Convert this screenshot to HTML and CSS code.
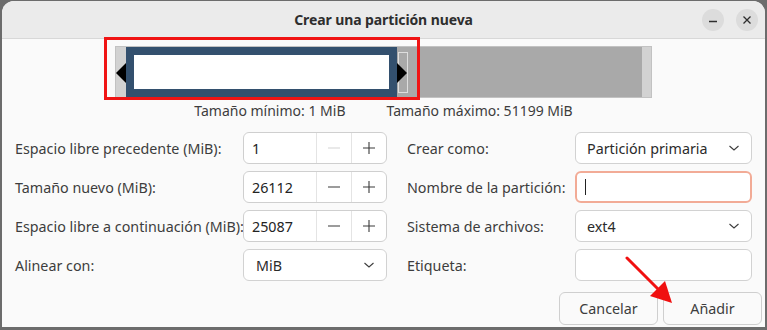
FILE: index.html
```html
<!DOCTYPE html>
<html lang="es">
<head>
<meta charset="utf-8">
<title>Crear una partición nueva</title>
<link rel="stylesheet" href="styles.css">
</head>
<body>
<div class="dialog">
  <header class="titlebar">
    <span class="title">Crear una partición nueva</span>
    <div class="wm-buttons">
      <span class="wm-btn"><svg width="12" height="12" viewBox="0 0 12 12"><line x1="2" y1="7.5" x2="10" y2="7.5" stroke="#2e2e2e" stroke-width="1.4"/></svg></span>
      <span class="wm-btn"><svg width="12" height="12" viewBox="0 0 12 12"><path d="M2.5 2.5 L9.5 9.5 M9.5 2.5 L2.5 9.5" stroke="#2e2e2e" stroke-width="1.3"/></svg></span>
    </div>
  </header>

  <main class="content">
    <div class="bar-row">
      <div class="strip">
        <div class="part"><div class="part-inner"></div></div>
        <div class="unalloc"></div>
        <span class="handle"></span>
        <svg class="tri tri-left" width="10" height="20" viewBox="0 0 10 20"><polygon points="10,0 0,10 10,20" fill="#000"/></svg>
        <svg class="tri tri-right" width="10" height="20" viewBox="0 0 10 20"><polygon points="0,0 10,10 0,20" fill="#000"/></svg>
      </div>
      <span class="highlight-box"></span>
    </div>

    <div class="stats">
      <span>Tamaño mínimo: 1 MiB</span>
      <span>Tamaño máximo: 51199 MiB</span>
    </div>

    <div class="form">
      <label class="lbl">Espacio libre precedente (MiB):</label>
      <div class="spin">
        <span class="spin-val">1</span>
        <span class="spin-btn disabled"><svg width="14" height="14" viewBox="0 0 14 14"><line x1="1" y1="7" x2="13" y2="7" stroke="currentColor" stroke-width="1.1"/></svg></span>
        <span class="spin-btn"><svg width="14" height="14" viewBox="0 0 14 14"><line x1="1" y1="7" x2="13" y2="7" stroke="currentColor" stroke-width="1.1"/><line x1="7" y1="1" x2="7" y2="13" stroke="currentColor" stroke-width="1.1"/></svg></span>
      </div>
      <label class="lbl lbl-r">Crear como:</label>
      <div class="combo"><span>Partición primaria</span><svg width="12" height="8" viewBox="0 0 12 8"><polyline points="1.5,2 6,6 10.5,2" fill="none" stroke="#3d3d3d" stroke-width="1.1"/></svg></div>

      <label class="lbl">Tamaño nuevo (MiB):</label>
      <div class="spin">
        <span class="spin-val">26112</span>
        <span class="spin-btn"><svg width="14" height="14" viewBox="0 0 14 14"><line x1="1" y1="7" x2="13" y2="7" stroke="currentColor" stroke-width="1.1"/></svg></span>
        <span class="spin-btn"><svg width="14" height="14" viewBox="0 0 14 14"><line x1="1" y1="7" x2="13" y2="7" stroke="currentColor" stroke-width="1.1"/><line x1="7" y1="1" x2="7" y2="13" stroke="currentColor" stroke-width="1.1"/></svg></span>
      </div>
      <label class="lbl lbl-r">Nombre de la partición:</label>
      <div class="entry focused"><span class="caret"></span></div>

      <label class="lbl">Espacio libre a continuación (MiB):</label>
      <div class="spin">
        <span class="spin-val">25087</span>
        <span class="spin-btn"><svg width="14" height="14" viewBox="0 0 14 14"><line x1="1" y1="7" x2="13" y2="7" stroke="currentColor" stroke-width="1.1"/></svg></span>
        <span class="spin-btn"><svg width="14" height="14" viewBox="0 0 14 14"><line x1="1" y1="7" x2="13" y2="7" stroke="currentColor" stroke-width="1.1"/><line x1="7" y1="1" x2="7" y2="13" stroke="currentColor" stroke-width="1.1"/></svg></span>
      </div>
      <label class="lbl lbl-r">Sistema de archivos:</label>
      <div class="combo"><span>ext4</span><svg width="12" height="8" viewBox="0 0 12 8"><polyline points="1.5,2 6,6 10.5,2" fill="none" stroke="#3d3d3d" stroke-width="1.1"/></svg></div>

      <label class="lbl">Alinear con:</label>
      <div class="combo combo-l"><span>MiB</span><svg width="12" height="8" viewBox="0 0 12 8"><polyline points="1.5,2 6,6 10.5,2" fill="none" stroke="#3d3d3d" stroke-width="1.1"/></svg></div>
      <label class="lbl lbl-r">Etiqueta:</label>
      <div class="entry"></div>
    </div>

    <div class="actions">
      <button class="btn">Cancelar</button>
      <button class="btn">Añadir</button>
      <svg class="pointer" width="60" height="60" viewBox="0 0 60 60">
        <line x1="2" y1="2" x2="36" y2="36" stroke="#f01010" stroke-width="3" stroke-linecap="round"/>
        <polygon points="47,47 25,40 40,25" fill="#f01010"/>
      </svg>
    </div>
  </main>
</div>
</body>
</html>
```

FILE: styles.css
```css
* { box-sizing: border-box; }

html, body {
  margin: 0;
  height: 100%;
}

body {
  background: #6c6c6c;
  padding: 1px 2px 3px 2px;
  font-family: "Noto Sans", "DejaVu Sans", sans-serif;
  font-size: 14.3px;
  color: #3d3d3d;
}

.dialog {
  width: 763px;
  height: 326px;
  background: #fafafa;
  border-radius: 12px 12px 0 0;
  overflow: hidden;
  display: flex;
  flex-direction: column;
}

.titlebar {
  position: relative;
  height: 38px;
  flex: none;
  background: #ebebeb;
  border-bottom: 1px solid #d8d8d8;
  display: flex;
  align-items: center;
  justify-content: center;
}

.title {
  font-weight: bold;
  font-size: 14px;
  color: #2e2e2e;
  letter-spacing: -0.1px;
}

.wm-buttons {
  position: absolute;
  right: 7px;
  top: 8px;
  display: flex;
  gap: 12px;
}

.wm-btn {
  width: 22px;
  height: 22px;
  border-radius: 50%;
  background: #dcdcdc;
  display: flex;
  align-items: center;
  justify-content: center;
}

.content {
  flex: 1;
  display: flex;
  flex-direction: column;
  padding: 7px 3px 0 13px;
}

.bar-row {
  position: relative;
  display: flex;
  justify-content: center;
  padding-right: 10px;
}

.strip {
  position: relative;
  width: 537px;
  height: 52px;
  background: #d2d2d2;
  border: 1px solid #c2c2c2;
  padding: 0 9px 0 10px;
  display: flex;
}

.part {
  width: 271px;
  border: 8px solid #33506e;
  background: #33506e;
}

.part-inner {
  height: 100%;
  background: #ffffff;
}

.unalloc {
  flex: 1;
  background: #a9a9a9;
}

.handle {
  position: absolute;
  left: 282px;
  top: 5px;
  width: 10px;
  height: 41px;
  border: 1px solid #dedede;
}

.tri {
  position: absolute;
  top: 16px;
}

.tri-left { left: 0; }
.tri-right { left: 281px; }

.highlight-box {
  position: absolute;
  left: 89px;
  top: -9px;
  width: 316px;
  height: 63px;
  border: 3px solid #f01414;
}

.stats {
  display: flex;
  justify-content: center;
  gap: 41px;
  margin-top: 4px;
  padding-right: 10px;
  font-size: 14px;
  line-height: 18px;
}

.form {
  margin-top: 12px;
  display: grid;
  grid-template-columns: 228px 144px 188px 177px;
  grid-auto-rows: 32px;
  row-gap: 7px;
  align-items: center;
}

.lbl {
  white-space: nowrap;
}

.lbl-r {
  padding-left: 20px;
}

.spin {
  height: 32px;
  display: flex;
  background: #fff;
  border: 1px solid #cfcfcf;
  border-radius: 6px;
  overflow: hidden;
}

.spin-val {
  width: 72px;
  padding-left: 8px;
  display: flex;
  align-items: center;
  color: #232323;
}

.spin-btn {
  flex: 1;
  border-left: 1px solid #e4e4e4;
  display: flex;
  align-items: center;
  justify-content: center;
  color: #3a3a3a;
}

.spin-btn.disabled {
  color: #d4d4d4;
}

.combo {
  height: 32px;
  display: flex;
  align-items: center;
  justify-content: space-between;
  padding: 0 11px 0 11px;
  background: #fff;
  border: 1px solid #d2d2d2;
  border-radius: 6px;
  color: #2b2b2b;
}

.combo-l {
  padding-left: 12px;
}

.entry {
  height: 32px;
  background: #fff;
  border: 1px solid #d2d2d2;
  border-radius: 6px;
  display: flex;
  align-items: center;
  padding-left: 8px;
}

.entry.focused {
  border: 2px solid #f2ab96;
}

.caret {
  width: 1px;
  height: 16px;
  background: #222;
}

.actions {
  position: relative;
  margin-top: 11px;
  display: flex;
  justify-content: flex-end;
  gap: 5px;
}

.btn {
  width: 99px;
  height: 33px;
  background: #fafafa;
  border: 1px solid #cfcfcf;
  border-radius: 6px;
  font-family: inherit;
  font-size: 14.3px;
  color: #3d3d3d;
}

.pointer {
  position: absolute;
  right: 77px;
  top: -36px;
}
```
